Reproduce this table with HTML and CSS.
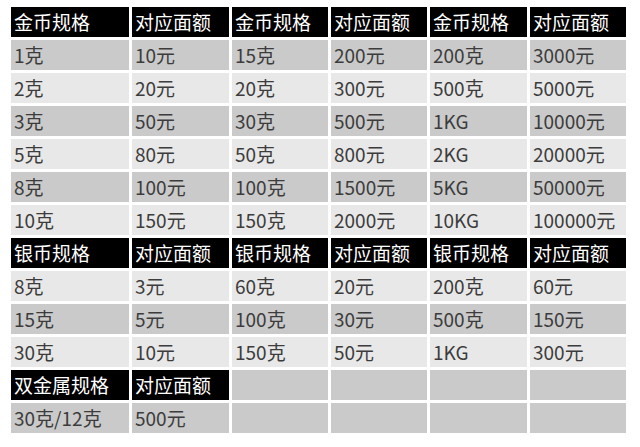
FILE: index.html
```html
<!DOCTYPE html>
<html lang="zh">
<head>
<meta charset="utf-8">
<link rel="stylesheet" href="styles.css">
</head>
<body>
<div class="sheet">
  <div class="c h">金币规格</div><div class="c h">对应面额</div><div class="c h">金币规格</div><div class="c h">对应面额</div><div class="c h">金币规格</div><div class="c h">对应面额</div>
  <div class="c d">1克</div><div class="c d">10元</div><div class="c d">15克</div><div class="c d">200元</div><div class="c d">200克</div><div class="c d">3000元</div>
  <div class="c l">2克</div><div class="c l">20元</div><div class="c l">20克</div><div class="c l">300元</div><div class="c l">500克</div><div class="c l">5000元</div>
  <div class="c d">3克</div><div class="c d">50元</div><div class="c d">30克</div><div class="c d">500元</div><div class="c d">1KG</div><div class="c d">10000元</div>
  <div class="c l">5克</div><div class="c l">80元</div><div class="c l">50克</div><div class="c l">800元</div><div class="c l">2KG</div><div class="c l">20000元</div>
  <div class="c d">8克</div><div class="c d">100元</div><div class="c d">100克</div><div class="c d">1500元</div><div class="c d">5KG</div><div class="c d">50000元</div>
  <div class="c l">10克</div><div class="c l">150元</div><div class="c l">150克</div><div class="c l">2000元</div><div class="c l">10KG</div><div class="c l">100000元</div>
  <div class="c h">银币规格</div><div class="c h">对应面额</div><div class="c h">银币规格</div><div class="c h">对应面额</div><div class="c h">银币规格</div><div class="c h">对应面额</div>
  <div class="c l">8克</div><div class="c l">3元</div><div class="c l">60克</div><div class="c l">20元</div><div class="c l">200克</div><div class="c l">60元</div>
  <div class="c d">15克</div><div class="c d">5元</div><div class="c d">100克</div><div class="c d">30元</div><div class="c d">500克</div><div class="c d">150元</div>
  <div class="c l">30克</div><div class="c l">10元</div><div class="c l">150克</div><div class="c l">50元</div><div class="c l">1KG</div><div class="c l">300元</div>
  <div class="c h">双金属规格</div><div class="c h">对应面额</div><div class="c d"></div><div class="c d"></div><div class="c d"></div><div class="c d"></div>
  <div class="c d">30克/12克</div><div class="c d">500元</div><div class="c d"></div><div class="c d"></div><div class="c d"></div><div class="c d"></div>
</div>
</body>
</html>
```
FILE: styles.css
```css
html, body {
  margin: 0;
  padding: 0;
  background: #ffffff;
}
.sheet {
  display: grid;
  grid-template-columns: 118px 97px 96px 96px 97px 96px;
  grid-auto-rows: 30px;
  gap: 3px;
  padding: 7px 0 0 11px;
  font-family: "Noto Sans CJK SC", "Noto Sans", sans-serif;
  font-size: 19px;
}
.c {
  display: flex;
  align-items: center;
  padding: 0 0 1px 3px;
  line-height: 1;
  color: #3c3c3c;
  white-space: nowrap;
  overflow: hidden;
}
.h {
  background: #000000;
  color: #ffffff;
}
.d {
  background: #cacaca;
}
.l {
  background: #e8e8e8;
}
```
